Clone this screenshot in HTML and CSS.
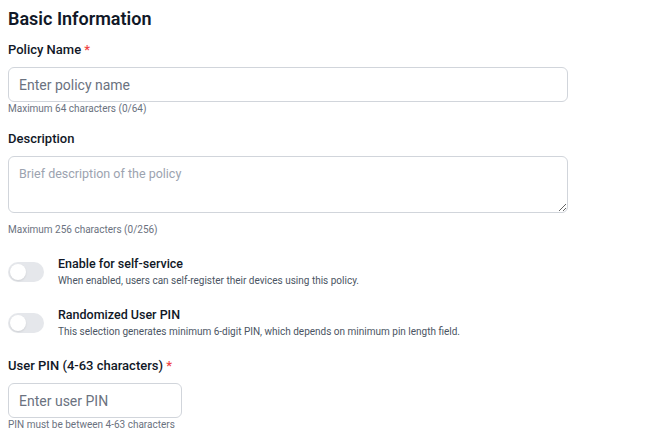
FILE: index.html
```html
<!DOCTYPE html>
<html lang="en">
<head>
    <meta charset="UTF-8">
    <meta name="viewport" content="width=device-width, initial-scale=1.0">
    <title>Policy - Basic Information</title>
    <link rel="stylesheet" href="styles.css">
</head>
<body>
    <form class="policy-form">
        <h2 class="section-title">Basic Information</h2>

        <div class="field">
            <label class="field-label" for="policyName">Policy Name <span class="required">*</span></label>
            <input type="text" id="policyName" class="text-input wide" maxlength="64" placeholder="Enter policy name">
            <div class="hint">Maximum 64 characters (0/64)</div>
        </div>

        <div class="field">
            <label class="field-label" for="description">Description</label>
            <textarea id="description" class="text-area" maxlength="256" placeholder="Brief description of the policy"></textarea>
            <div class="hint hint-spaced">Maximum 256 characters (0/256)</div>
        </div>

        <div class="toggle-list">
            <div class="toggle-row">
                <span class="toggle"><span class="knob"></span></span>
                <div class="toggle-text">
                    <div class="toggle-title">Enable for self-service</div>
                    <div class="toggle-desc">When enabled, users can self-register their devices using this policy.</div>
                </div>
            </div>
            <div class="toggle-row">
                <span class="toggle"><span class="knob"></span></span>
                <div class="toggle-text">
                    <div class="toggle-title">Randomized User PIN</div>
                    <div class="toggle-desc">This selection generates minimum 6-digit PIN, which depends on minimum pin length field.</div>
                </div>
            </div>
        </div>

        <div class="field">
            <label class="field-label" for="userPin">User PIN (4-63 characters) <span class="required">*</span></label>
            <input type="text" id="userPin" class="text-input short" placeholder="Enter user PIN">
            <div class="hint">PIN must be between 4-63 characters</div>
        </div>
    </form>
</body>
</html>
```

FILE: styles.css
```css
body {
    margin: 0;
    padding: 8px;
    font-family: Roboto, "Liberation Sans", Arial, sans-serif;
    color: #111827;
    background-color: white;
}
.section-title {
    margin: 0 0 11px;
    font-size: 18px;
    line-height: 22px;
    font-weight: 600;
}
.field {
    margin-bottom: 14px;
}
.field-label {
    display: block;
    margin-bottom: 8px;
    font-size: 13px;
    line-height: 18px;
    font-weight: 500;
}
.required {
    color: #ef4444;
}
.text-input, .text-area {
    display: block;
    box-sizing: border-box;
    border: 1px solid #d1d5db;
    border-radius: 6px;
    font-family: inherit;
    color: #111827;
    background: white;
    margin: 0;
}
.text-input {
    height: 35px;
    padding: 0 10px;
    font-size: 14px;
}
.text-input::placeholder {
    color: #6b7280;
}
.wide {
    width: 560px;
}
.short {
    width: 174px;
}
.text-area {
    width: 560px;
    height: 57px;
    padding: 8px 10px;
    font-size: 12.5px;
    line-height: 18px;
}
.text-area::placeholder {
    color: #9ca3af;
}
.hint {
    font-size: 10px;
    line-height: 14px;
    color: #6b7280;
}
.hint-spaced {
    margin-top: 10px;
}
.toggle-list {
    display: flex;
    flex-direction: column;
    gap: 18px;
    margin: 18px 0;
}
.toggle-row {
    display: flex;
    align-items: flex-start;
    gap: 14px;
}
.toggle {
    position: relative;
    flex: none;
    width: 36px;
    height: 20px;
    margin-top: 7px;
    border-radius: 10px;
    background-color: #e5e7eb;
}
.knob {
    position: absolute;
    top: 2px;
    left: 2px;
    width: 16px;
    height: 16px;
    border-radius: 50%;
    background: white;
    box-shadow: 0 1px 2px rgba(0,0,0,0.1);
}
.toggle-title {
    font-size: 12.5px;
    line-height: 18px;
    font-weight: 500;
}
.toggle-desc {
    margin-top: 1px;
    font-size: 10px;
    line-height: 14px;
    color: #4b5563;
}
```
